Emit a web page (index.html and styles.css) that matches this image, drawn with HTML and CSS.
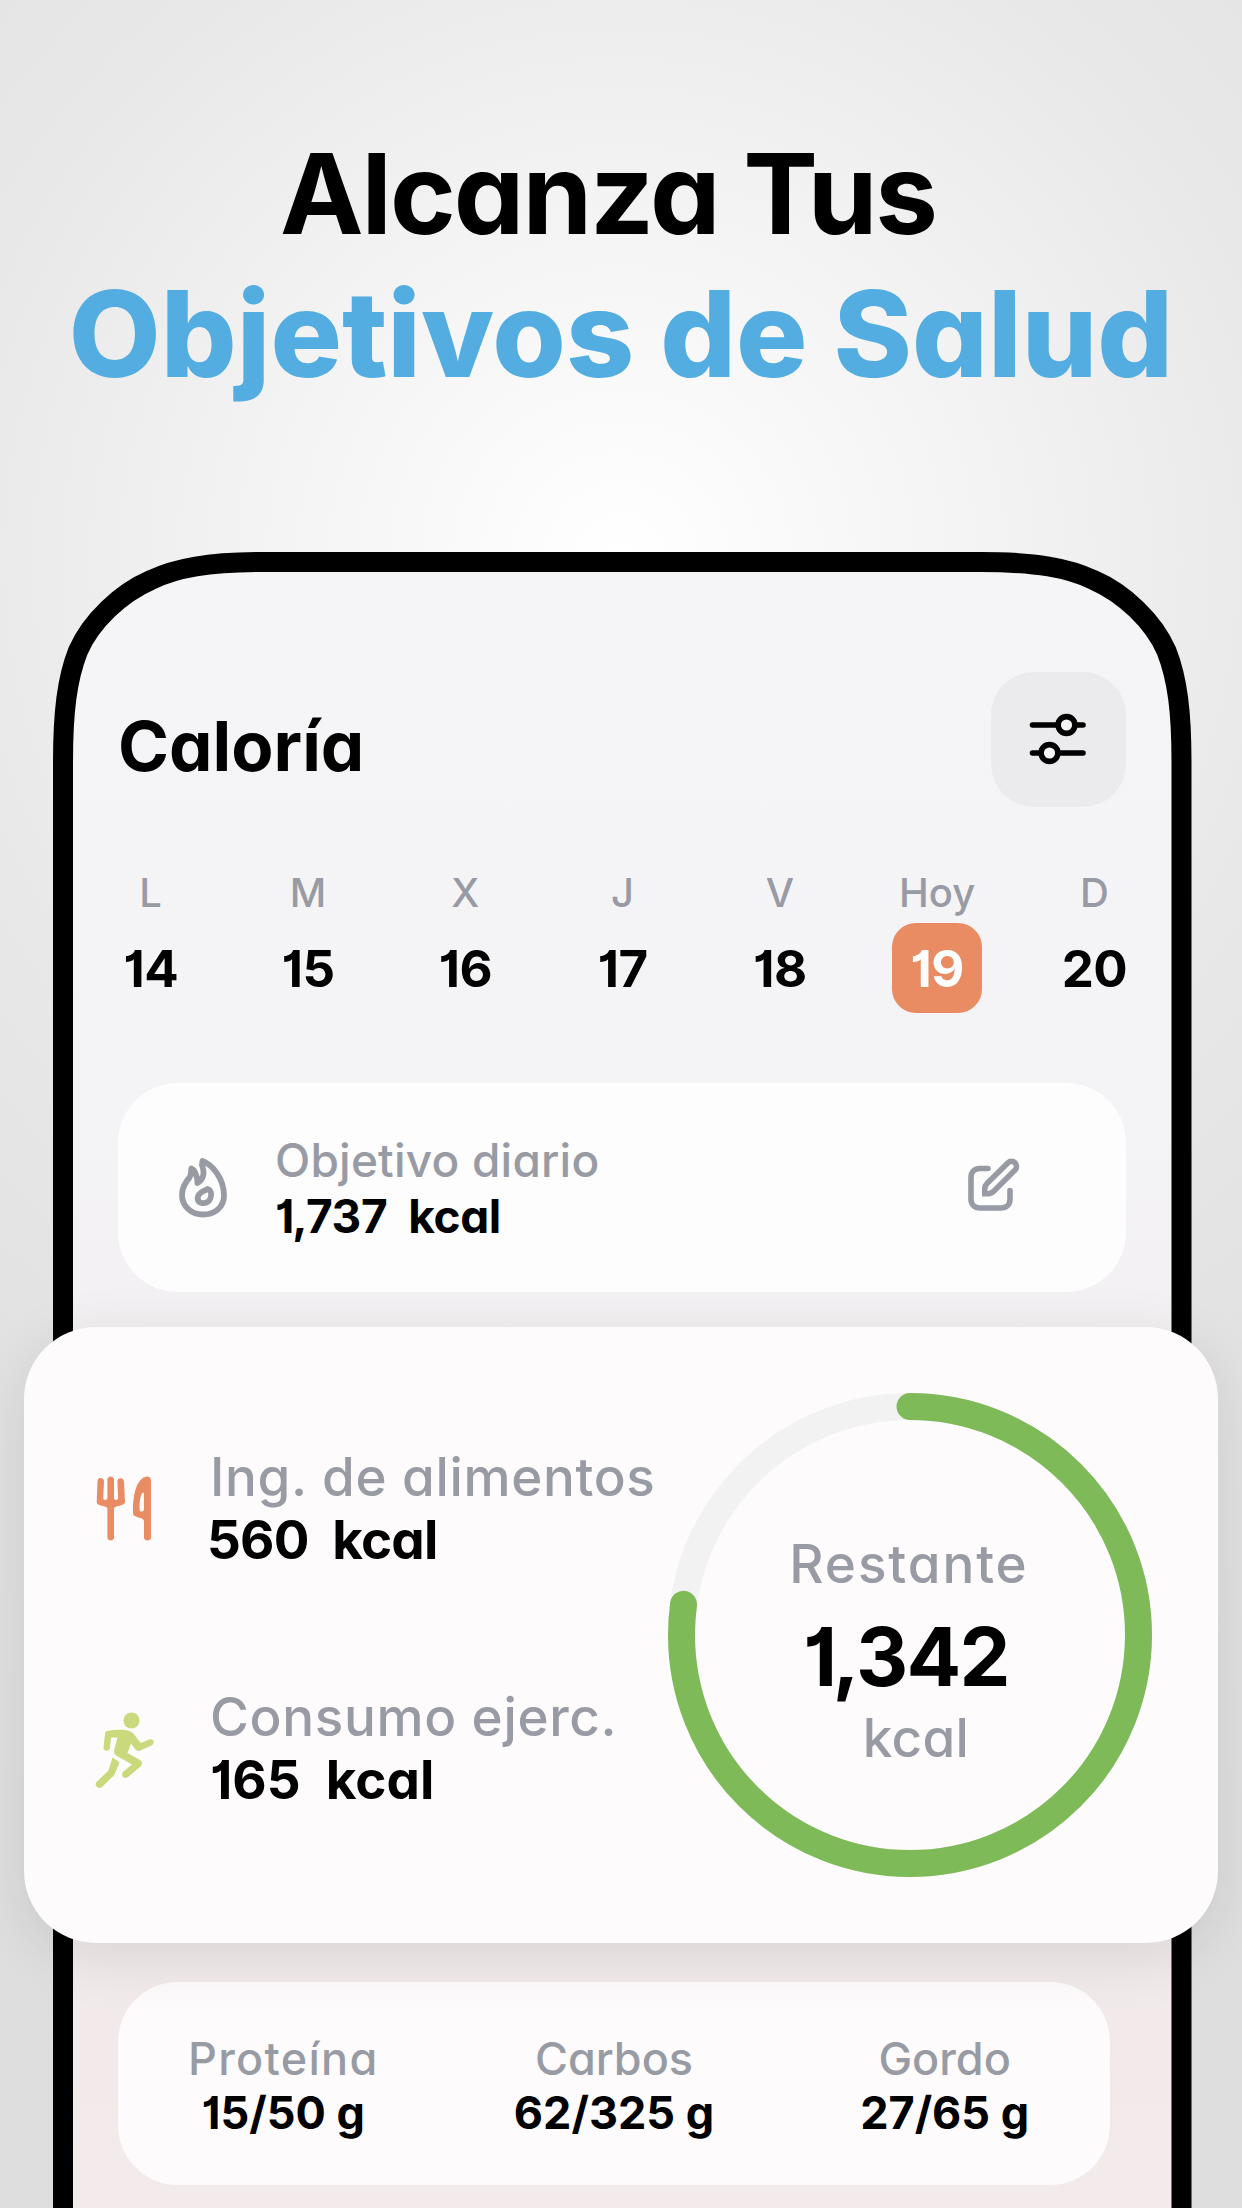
FILE: index.html
```
<!DOCTYPE html>
<html lang="es">
<head>
  <meta charset="UTF-8" />
  <meta name="viewport" content="width=device-width, initial-scale=1.0"/>
  <title>Caloría</title>
  <link rel="stylesheet" href="styles.css">
</head>
<body>

<header>
  <h1 class="headline">Alcanza Tus</h1>
  <h1 class="headline-blue">Objetivos de Salud</h1>
</header>

<main class="phone">
  <svg class="frame" width="1139" height="1676" viewBox="53 552 1139 1676">
    <defs>
      <linearGradient id="screen" x1="0" y1="0" x2="0" y2="1">
        <stop offset="0" stop-color="#f5f5f8"/>
        <stop offset="0.27" stop-color="#f4f4f7"/>
        <stop offset="0.46" stop-color="#f3f0f2"/>
        <stop offset="0.85" stop-color="#f2eaea"/>
        <stop offset="1" stop-color="#f4eaeb"/>
      </linearGradient>
    </defs>
    <path d="M63 2300V762C63 712 67 679 78 651C91 621 121 593 151 580C176 568 208 562 264 562H980.500C1036.500 562 1068.500 568 1093.500 580C1123.500 593 1153.500 621 1166.500 651C1177.500 679 1181.500 712 1181.500 762V2300Z" fill="url(#screen)" stroke="#000" stroke-width="20"/>
  </svg>

  <div class="topbar">
    <h2>Caloría</h2>
    <button class="settings">
      <svg width="58" height="54" viewBox="0 0 58 54" fill="none" stroke="#000" stroke-width="5.600" stroke-linecap="round">
        <path d="M3.500 13H29M47 13H54M3.500 41H12M30 41H54"/>
        <circle cx="37.500" cy="13" r="8.400" fill="#f6f6f7"/>
        <circle cx="20.500" cy="41" r="8.400" fill="#f6f6f7"/>
      </svg>
    </button>
  </div>

  <div class="week">
    <div class="day"><span>L</span><b>14</b></div>
    <div class="day"><span>M</span><b>15</b></div>
    <div class="day"><span>X</span><b>16</b></div>
    <div class="day"><span>J</span><b>17</b></div>
    <div class="day"><span>V</span><b>18</b></div>
    <div class="day today"><span>Hoy</span><b>19</b></div>
    <div class="day"><span>D</span><b>20</b></div>
  </div>

  <div class="goal">
    <svg width="48" height="60" viewBox="0 0 48 60" fill="none" stroke="#989ba4" stroke-width="5.800" stroke-linejoin="round">
      <path d="M23.500 3C34 7 45 21 45 37.500C45 49 36 56.500 24 56.500C12 56.500 3 48 3 37C3 29 7 23.500 10.500 19.500C12.500 16.500 12 13 12.300 10.500C16 12 18 16 18.500 25C23.500 22.500 26.500 16 23 7Z"/>
      <path d="M28.500 31C32 32 33 36 31.500 40C30 44 26.500 45.500 23 45C18.500 44.500 17.500 40 20 36.500C22 33.500 25.500 33 28.500 31Z"/>
    </svg>
    <div class="goal-text">
      <span>Objetivo diario</span>
      <b>1,737&nbsp; kcal</b>
    </div>
    <svg class="edit" width="54" height="54" viewBox="0 0 54 54" fill="none" stroke="#989ba4" stroke-width="5.600" stroke-linecap="round">
      <path d="M20 10.500H12C6.500 10.500 3 14 3 19.500V41C3 46.500 6.500 50 12 50H33C38.500 50 42 46.500 42 41V32.500"/>
      <path d="M16.800 35.800V30C16.800 28 18 26.500 19.500 25L40 4.800C42 2.800 45 2.800 47 4.800C49 6.800 49 10 47 12L26.500 32.500C24.500 34.500 23 35.800 20.500 35.800Z"/>
    </svg>
  </div>

  <div class="summary">
    <div class="entries">
      <div class="entry">
        <svg width="60" height="68" viewBox="0 0 60 68" fill="#e98c64">
          <path d="M4.500 3C6.500 3 8 4.300 8 6.500L7.200 23C7.200 25.500 11.400 25.500 11.400 23V4.500C11.400 0.500 18 0.500 18 4.500V23C18 25.500 22.200 25.500 22.200 23L21.400 6.500C21.400 2.200 27.700 2.200 28 6.500L29 27C29 31.500 18.500 30 18 33.500V62.500C18 66.500 11.400 66.500 11.400 62.500V33.500C11 30 0.500 31.500 0.700 27L1.500 6.500C1.500 4.500 2.500 3 4.500 3Z"/>
          <path fill-rule="evenodd" d="M51 1.500C53.500 1.500 55 3 55 5.500V62.500C55 66.500 48 66.500 48 62.500V46C48 42 37 43 37 38.500C36.300 19 41 3 51 1.500ZM47 17.500C44.500 19 43.500 26 43.600 34.500C43.600 37.500 48 37 48 34.500V18.500Z"/>
        </svg>
        <div class="entry-text">
          <span>Ing. de alimentos</span>
          <b class="food">560&nbsp; kcal</b>
        </div>
      </div>
      <div class="entry">
        <svg class="runner" width="60" height="76" viewBox="0 0 60 76" fill="#c9d97c">
          <circle cx="36.500" cy="8.500" r="8"/>
          <path d="M12 19C18 18 24 17.500 31 18C39 19 41 26 46 31L54 27.500C58.500 26 60.500 31 56.500 33.500L45.500 38.500C43.500 39.300 42 39 40.500 37.500L36 31.500L32.500 41L45 48C47.500 49.500 47.500 52.500 45.500 54.500L33 65C28.500 68 25 63 28.500 59.500L37 52.500L22 44C19.500 42.500 18.500 40 19.300 37.500L22.500 25.500H16L15 36C14 40 8.500 39.500 8.500 35.500L10 22C10.300 20.300 11 19.300 12 19Z"/>
          <path d="M17.500 45.500L24.500 50.200L20 61.500C19.500 63 18.700 63.500 17.500 64.700L7 75C3.500 78 -1.500 73.500 1.500 70L13.500 58.500Z"/>
        </svg>
        <div class="entry-text">
          <span>Consumo ejerc.</span>
          <b>165&nbsp; kcal</b>
        </div>
      </div>
    </div>
    <div class="ring">
      <svg width="484" height="484" viewBox="0 0 484 484" fill="none" stroke-width="27">
        <circle cx="242" cy="242" r="228.500" stroke="#f2f2f2"/>
        <circle cx="242" cy="242" r="228.500" stroke="#7ebb58" stroke-linecap="round" pathLength="1000" stroke-dasharray="771.500 1000" transform="rotate(-90 242 242)"/>
      </svg>
      <div class="ring-text">
        <span class="left-label">Restante</span>
        <b>1,342</b>
        <span class="unit">kcal</span>
      </div>
    </div>
  </div>

  <div class="macros">
    <div class="macro protein"><span>Proteína</span><b>15/50 g</b></div>
    <div class="macro"><span>Carbos</span><b>62/325 g</b></div>
    <div class="macro"><span>Gordo</span><b>27/65 g</b></div>
  </div>
</main>

</body>
</html>
```
FILE: styles.css
```
* {
  box-sizing: border-box;
}
html {
  height: 2208px;
  overflow: hidden;
}
body {
  width: 1242px;
  height: 2208px;
  margin: 0;
  overflow: hidden;
  font-family: Inter, sans-serif;
  font-feature-settings: "cv11", "cv01";
  font-optical-sizing: none;
  color: #000;
  background: radial-gradient(circle at 621px 560px, #fff 0, #f3f3f3 370px, #e8e8e8 690px, #e2e2e2 1000px, #dedede 1600px);
}
h1, h2 {
  margin: 0;
}
span, b {
  display: block;
  white-space: nowrap;
}
span {
  font-weight: 500;
  color: #989ba4;
}
svg {
  flex: none;
}
header {
  height: 552px;
  padding-top: 133px;
  text-align: center;
  white-space: nowrap;
}
.headline {
  font-size: 112px;
  line-height: 120px;
  letter-spacing: -2px;
  margin-right: 26px;
}
.headline-blue {
  margin-top: 11px;
  font-size: 119px;
  font-weight: 800;
  line-height: 140px;
  color: #53ade1;
}
.phone {
  position: relative;
  width: 1139px;
  height: 1656px;
  margin-left: 53px;
  padding: 120px 66px 0 65px;
}
.frame {
  position: absolute;
  top: 0;
  left: 0;
}
.topbar, .week, .goal, .summary, .macros {
  position: relative;
}
.topbar {
  display: flex;
  justify-content: space-between;
  align-items: center;
  height: 135px;
}
.topbar h2 {
  padding-top: 12px;
  font-size: 69px;
  line-height: 80px;
}
.settings {
  width: 135px;
  height: 135px;
  padding: 0 2px 2px 0;
  border: none;
  border-radius: 43px;
  background: #ebebed;
}
.settings svg {
  display: block;
  margin: 0 auto;
}
.week {
  display: grid;
  grid-template-columns: repeat(7, 157.300px);
  margin: 62px 0 0 -46px;
}
.day {
  display: flex;
  flex-direction: column;
  align-items: center;
  gap: 6px;
}
.day span {
  font-size: 40px;
  line-height: 48px;
}
.day b {
  width: 90px;
  font-size: 51px;
  line-height: 91px;
  letter-spacing: -0.500px;
  text-align: center;
}
.today b {
  height: 90px;
  border-radius: 24px;
  color: white;
  background: #e98c64;
}
.goal {
  display: flex;
  align-items: center;
  height: 209px;
  margin-top: 69px;
  padding: 0 104px 0 61px;
  border-radius: 60px;
  background: #fdfdfd;
}
.goal-text {
  flex: 1;
  margin-left: 48px;
  font-size: 46px;
  line-height: 56px;
}
.goal-text span {
  letter-spacing: 0.200px;
}
.goal-text b {
  letter-spacing: -0.400px;
}
.edit {
  margin-bottom: 5px;
}
.summary {
  z-index: 1;
  display: flex;
  justify-content: space-between;
  width: 1194px;
  height: 616px;
  margin: 35px -94px 0;
  padding: 66px 66px 0 72px;
  border-radius: 72px;
  background: #fdfbfc;
  box-shadow: 0 14px 60px rgba(0,0,0,0.1);
}
.entries {
  display: flex;
  flex-direction: column;
  gap: 114px;
  width: 562px;
  padding-top: 53px;
}
.entry {
  display: flex;
  align-items: center;
  height: 126px;
}
.entry-text {
  margin-left: 54px;
  font-size: 53px;
  line-height: 63px;
}
.entry-text span {
  letter-spacing: 0.650px;
}
.entry-text .food {
  margin-left: -3px;
  letter-spacing: -0.800px;
}
.runner {
  margin: 2px 1px 0 -1px;
}
.ring {
  flex: none;
  display: grid;
  width: 484px;
  height: 484px;
}
.ring svg, .ring-text {
  grid-area: 1 / 1;
}
.ring-text {
  padding-top: 144px;
  text-align: center;
  font-size: 53px;
  line-height: 54px;
}
.left-label {
  padding-right: 2px;
  letter-spacing: 1.900px;
}
.ring-text b {
  margin-top: 12px;
  padding-right: 8px;
  font-size: 81px;
  line-height: 108px;
  letter-spacing: -1.700px;
}
.unit {
  padding-left: 12px;
  letter-spacing: 0.400px;
}
.macros {
  display: grid;
  grid-template-columns: repeat(3, 1fr);
  width: 992px;
  height: 203px;
  margin-top: 39px;
  padding-top: 50px;
  border-radius: 60px;
  background: #fdfbfc;
}
.macro {
  text-align: center;
  font-size: 45px;
  line-height: 54px;
}
.protein span {
  letter-spacing: 1.300px;
}
```
